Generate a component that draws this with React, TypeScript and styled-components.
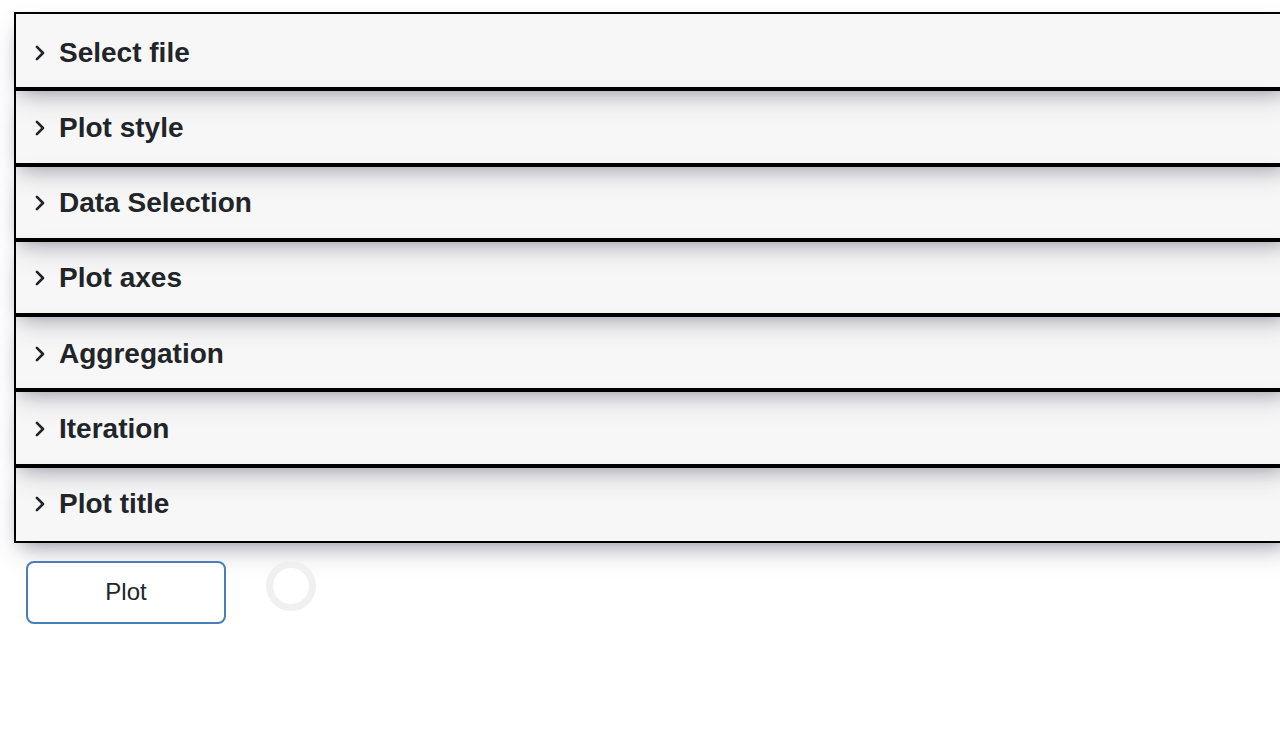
import React, { useState } from "react";
import styled, { createGlobalStyle } from "styled-components";

const GlobalStyle = createGlobalStyle`
  *, *::before, *::after {
    box-sizing: border-box;
  }

  body {
    margin: 0;
    background: #fff;
    color: #212529;
    font-family: "Liberation Sans", Arial, sans-serif;
    overflow-x: hidden;
  }
`;

const Page = styled.main`
  padding: 12px 0 0 14px;
`;

const Accordion = styled.div`
  display: flex;
  flex-direction: column;
  min-height: 531px;
  margin-right: -12px;
`;

const Card = styled.section`
  flex: 1 1 auto;
  display: flex;
  flex-direction: column;
  border: 2px solid #000;
  background: rgba(0, 0, 0, 0.03);
  box-shadow:
    rgba(50, 50, 93, 0.25) 0 13px 27px -5px,
    rgba(0, 0, 0, 0.3) 0 8px 16px -8px;

  &:first-child {
    padding-top: 2px;
  }

  &:last-child {
    padding-bottom: 2px;
  }
`;

const CardTitle = styled.h2`
  flex: 1 1 auto;
  display: flex;
  margin: 0;
  font-size: 28px;
  line-height: 34px;
`;

const CardToggle = styled.button`
  flex: 1;
  display: flex;
  align-items: center;
  gap: 12px;
  padding: 19px 18px 17px;
  border: 0;
  background: none;
  color: inherit;
  font: inherit;
  text-align: left;
  cursor: pointer;
`;

const Chevron = styled.svg<{ $open: boolean }>`
  flex: none;
  width: 13px;
  height: 16px;
  transform: ${({ $open }) => ($open ? "rotate(90deg)" : "none")};
`;

const CardBody = styled.div`
  padding: 18px;
`;

const Actions = styled.div`
  display: flex;
  align-items: flex-start;
  gap: 40px;
  padding: 18px 12px;
`;

const PlotButton = styled.button`
  width: 200px;
  padding: 14px 24px 15px;
  border: 2px solid #4a7ebb;
  border-radius: 8px;
  background: #fff;
  color: inherit;
  font-family: inherit;
  font-size: 24px;
  line-height: 30px;
  cursor: pointer;
`;

const Spinner = styled.div`
  width: 50px;
  height: 50px;
  border: 7px solid #f0f0f0;
  border-radius: 50%;
  background: #fff;
`;

const sections = [
  "Select file",
  "Plot style",
  "Data Selection",
  "Plot axes",
  "Aggregation",
  "Iteration",
  "Plot title",
];

function Section({ title }: { title: string }) {
  const [open, setOpen] = useState(false);
  return (
    <Card>
      <CardTitle>
        <CardToggle type="button" aria-expanded={open} onClick={() => setOpen(!open)}>
          <Chevron $open={open} viewBox="0 0 13 16" aria-hidden="true">
            <path
              d="M2.9 1.9 L9 8 L2.9 14.1"
              fill="none"
              stroke="currentColor"
              strokeWidth="2.6"
              strokeLinecap="round"
              strokeLinejoin="round"
            />
          </Chevron>
          {title}
        </CardToggle>
      </CardTitle>
      {open && <CardBody />}
    </Card>
  );
}

export default function App() {
  return (
    <>
      <GlobalStyle />
      <Page>
        <Accordion>
          {sections.map((title) => (
            <Section key={title} title={title} />
          ))}
        </Accordion>
        <Actions>
          <PlotButton type="button">Plot</PlotButton>
          <Spinner role="status" aria-label="Idle" />
        </Actions>
      </Page>
    </>
  );
}
